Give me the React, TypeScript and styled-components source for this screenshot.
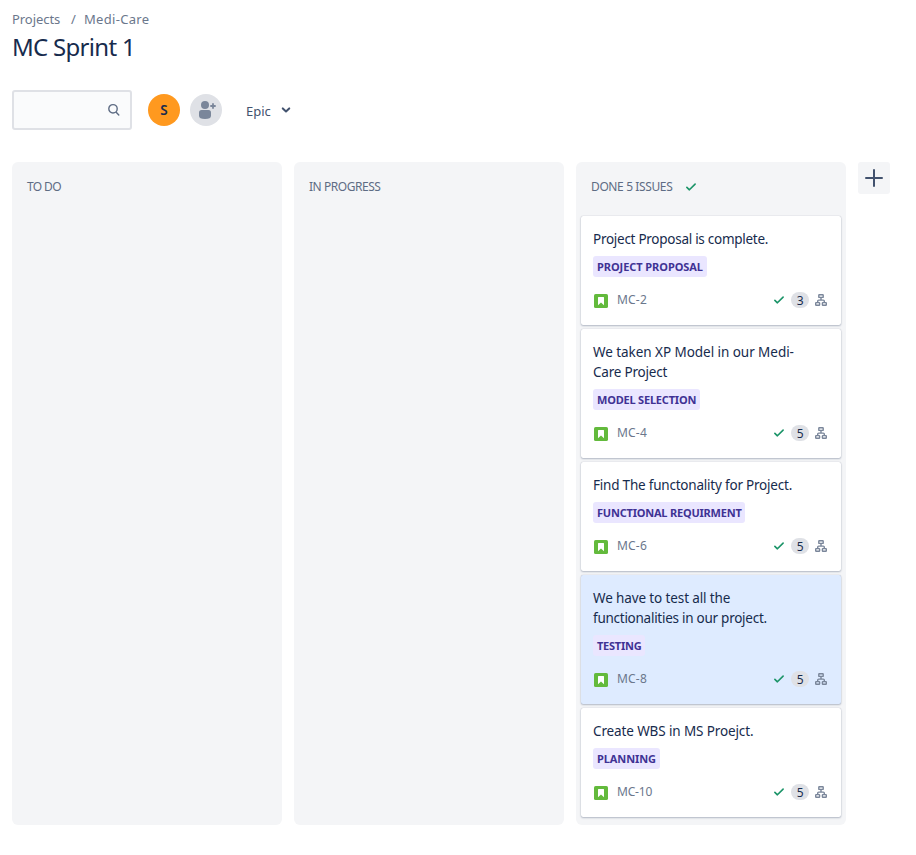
import React from 'react';
import styled, { createGlobalStyle } from 'styled-components';

const GlobalStyle = createGlobalStyle`
  * { box-sizing: border-box; }
  body {
    margin: 0;
    background: #fff;
    color: #172b4d;
    font-family: "Noto Sans", "Open Sans", sans-serif;
    font-size: 14px;
  }
`;

/* Text whose letter spacing is tuned per label. */
const Label = styled.span<{ $track?: number }>`
  letter-spacing: ${(p) => p.$track ?? 0}px;
  white-space: nowrap;
`;

const Page = styled.main`
  display: flex;
  flex-direction: column;
  height: 855px;
  padding: 9px 26px 30px 12px;
  overflow: hidden;
`;

const Breadcrumbs = styled.nav`
  display: flex;
  height: 20px;
  line-height: 20px;
  font-size: 13px;
  color: #6b778c;
`;

const Crumb = styled(Label)<{ $width: number }>`
  width: ${(p) => p.$width}px;
`;

const Title = styled.h1`
  margin: 2px 0 0;
  height: 32px;
  font-size: 24px;
  font-weight: 400;
  line-height: 32px;
`;

const Toolbar = styled.div`
  display: flex;
  align-items: center;
  height: 40px;
  margin-top: 27px;
`;

const SearchBox = styled.div`
  display: flex;
  align-items: center;
  justify-content: flex-end;
  width: 120px;
  height: 40px;
  padding-right: 9px;
  border: 2px solid #dfe1e6;
  border-radius: 3px;
  background: #fafbfc;
`;

const Avatar = styled.div<{ $color: string; $gap: number }>`
  display: flex;
  align-items: center;
  justify-content: center;
  width: 32px;
  height: 32px;
  margin-left: ${(p) => p.$gap}px;
  border-radius: 50%;
  background: ${(p) => p.$color};
  font-size: 13.5px;
  font-weight: 600;
`;

const Filter = styled.div`
  display: flex;
  align-items: center;
  gap: 10px;
  margin: 2px 0 0 24px;
  font-size: 13px;
  color: #42526e;

  svg {
    margin-top: -2px;
  }
`;

const Board = styled.div`
  display: flex;
  flex: 1;
  gap: 12px;
  margin-top: 32px;
`;

const Column = styled.section`
  width: 270px;
  height: 663px;
  flex: none;
  padding: 0 5px;
  border-radius: 6px;
  background: #f4f5f7;
`;

const ColumnHeader = styled.header`
  display: flex;
  align-items: center;
  gap: 14px;
  height: 54px;
  padding: 0 10px 5px;
  font-size: 12px;
  color: #5e6c84;
`;

const AddColumn = styled.div`
  display: flex;
  align-items: center;
  justify-content: center;
  width: 32px;
  height: 32px;
  border-radius: 3px;
  background: #f4f5f7;
`;

const CardList = styled.div`
  display: flex;
  flex-direction: column;
  gap: 4px;
`;

const Card = styled.article<{ $selected?: boolean }>`
  padding: 13px 14px 17px 12px;
  border-radius: 2px;
  background: ${(p) => (p.$selected ? '#deebff' : '#fff')};
  box-shadow: 0 1px 2px rgba(9, 30, 66, 0.25), 0 0 1px rgba(9, 30, 66, 0.31);
`;

const Summary = styled.div`
  display: flex;
  flex-direction: column;
  line-height: 20px;
  font-size: 13.5px;
`;

const Epic = styled.div<{ $width: number }>`
  width: ${(p) => p.$width}px;
  height: 21px;
  margin-top: 7px;
  padding-left: 4px;
  border-radius: 3px;
  background: #eae6ff;
  color: #403294;
  font-size: 11px;
  font-weight: 700;
  line-height: 21px;
`;

const CardFooter = styled.footer`
  display: flex;
  align-items: center;
  height: 16px;
  margin-top: 15px;
`;

const StoryIcon = styled.svg`
  margin: 2px 9px 0 1px;
`;

const IssueKey = styled(Label)`
  flex: 1;
  color: #6b778c;
  font-size: 12px;
  line-height: 16px;
`;

const Estimate = styled.div`
  width: 18px;
  height: 16px;
  margin: 0 6px 0 7px;
  border-radius: 8px;
  background: #dfe1e6;
  font-size: 12px;
  letter-spacing: -0.3px;
  line-height: 17px;
  text-align: center;
`;

const Check = () => (
  <svg width="10" height="8" viewBox="0 0 10 8" fill="none" stroke="#1b9468" strokeWidth="1.6" strokeLinecap="round" strokeLinejoin="round">
    <path d="M.9 4.4 3.4 6.8 9.1 1.1" />
  </svg>
);

const Hierarchy = () => (
  <svg width="12" height="12" viewBox="0 0 12 12" fill="none" stroke="#7a869a" strokeWidth="1.4">
    <rect x="3.8" y=".7" width="4.4" height="2.7" rx=".5" />
    <rect x=".7" y="8.6" width="3.9" height="2.7" rx=".5" />
    <rect x="7.4" y="8.6" width="3.9" height="2.7" rx=".5" />
    <path d="M6 3.4v2.7M2.7 8.6V7.1q0-1 1-1h4.6q1 0 1 1v1.5" />
  </svg>
);

type Line = [text: string, track: number];
interface Issue {
  id: string;
  keyTrack: number;
  lines: Line[];
  epic: Line;
  epicWidth: number;
  points: number;
  selected?: boolean;
}

const issues: Issue[] = [
  { id: 'MC-2', keyTrack: 0.2, lines: [['Project Proposal is complete.', -0.27]], epic: ['PROJECT PROPOSAL', -0.06], epicWidth: 114, points: 3 },
  { id: 'MC-4', keyTrack: 0.2, lines: [['We taken XP Model in our Medi-', -0.05], ['Care Project', -0.2]], epic: ['MODEL SELECTION', -0.2], epicWidth: 107, points: 5 },
  { id: 'MC-6', keyTrack: 0.2, lines: [['Find The functonality for Project.', -0.21]], epic: ['FUNCTIONAL REQUIRMENT', -0.21], epicWidth: 152, points: 5 },
  { id: 'MC-8', keyTrack: 0.2, lines: [['We have to test all the', -0.12], ['functionalities in our project.', -0.26]], epic: ['TESTING', -0.25], epicWidth: 52, points: 5, selected: true },
  { id: 'MC-10', keyTrack: -0.2, lines: [['Create WBS in MS Proejct.', -0.12]], epic: ['PLANNING', -0.1], epicWidth: 67, points: 5 },
];

const IssueCard = ({ issue }: { issue: Issue }) => (
  <Card $selected={issue.selected}>
    <Summary>
      {issue.lines.map(([text, track]) => (
        <Label key={text} $track={track}>{text}</Label>
      ))}
    </Summary>
    <Epic $width={issue.epicWidth}>
      <Label $track={issue.epic[1]}>{issue.epic[0]}</Label>
    </Epic>
    <CardFooter>
      <StoryIcon width="14" height="14" viewBox="0 0 14 14">
        <rect width="14" height="14" rx="1.6" fill="#63ba3c" />
        <path d="M4.5 3h5q.5 0 .5.5v7.7L7 8.4 4 11.2V3.5q0-.5.5-.5z" fill="#fff" />
      </StoryIcon>
      <IssueKey $track={issue.keyTrack}>{issue.id}</IssueKey>
      <Check />
      <Estimate>{issue.points}</Estimate>
      <Hierarchy />
    </CardFooter>
  </Card>
);

export default function App() {
  return (
    <>
      <GlobalStyle />
      <Page>
        <Breadcrumbs>
          <Crumb $width={59} $track={-0.05}>Projects</Crumb>
          <Crumb $width={13}>/</Crumb>
          <Crumb $width={80} $track={0.3}>Medi-Care</Crumb>
        </Breadcrumbs>
        <Title><Label $track={-0.7}>MC Sprint 1</Label></Title>
        <Toolbar>
          <SearchBox>
            <svg width="14" height="14" viewBox="0 0 14 14" fill="none" stroke="#5e6c84" strokeWidth="1.4" strokeLinecap="round">
              <circle cx="6" cy="5.8" r="4.2" />
              <path d="m9.2 9.2 2.6 2.8" />
            </svg>
          </SearchBox>
          <Avatar $color="#ff991f" $gap={16}>S</Avatar>
          <Avatar $color="#dfe1e6" $gap={10}>
            <svg width="20" height="20" viewBox="0 0 20 20" fill="#7a869a">
              <circle cx="9" cy="5" r="4" />
              <path d="M3 12.5Q3 10 5.5 10h7Q15 10 15 12.5v3.2q0 3.3-6 3.3t-6-3.3z" />
              <path d="M17 3.3v5.4M14.3 6h5.4" stroke="#7a869a" strokeWidth="1.8" />
            </svg>
          </Avatar>
          <Filter>
            <Label>Epic</Label>
            <svg width="10" height="6" viewBox="0 0 10 6" fill="none" stroke="#42526e" strokeWidth="2" strokeLinecap="round" strokeLinejoin="round">
              <path d="M1.8 1.4 5 4.4l3.2-3" />
            </svg>
          </Filter>
        </Toolbar>
        <Board>
          <Column>
            <ColumnHeader><Label $track={-0.6}>TO DO</Label></ColumnHeader>
          </Column>
          <Column>
            <ColumnHeader><Label $track={-0.46}>IN PROGRESS</Label></ColumnHeader>
          </Column>
          <Column>
            <ColumnHeader><Label $track={-0.38}>DONE 5 ISSUES</Label><Check /></ColumnHeader>
            <CardList>
              {issues.map((issue) => <IssueCard key={issue.id} issue={issue} />)}
            </CardList>
          </Column>
          <AddColumn>
            <svg width="18" height="18" viewBox="0 0 18 18" stroke="#42526e" strokeWidth="2" strokeLinecap="round">
              <path d="M9 1v16M1 9h16" />
            </svg>
          </AddColumn>
        </Board>
      </Page>
    </>
  );
}
